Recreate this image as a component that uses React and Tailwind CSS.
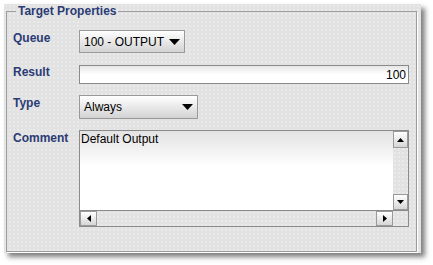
import React from "react";

const LABEL = "pt-[1px] text-[12px] font-bold leading-[14px] text-[#2b3b75]";
const TEX =
  "bg-[#e2e2e2] bg-[radial-gradient(circle,#eaeaea_0.7px,transparent_1px)] bg-[size:4px_4px]";

function Arrow({ dir, size = "sm" }) {
  const big = size === "lg";
  const w = big ? 11 : 7;
  const h = big ? 6 : 4;
  const pts = {
    down: `0,0 ${w},0 ${w / 2},${h}`,
    up: `0,${h} ${w},${h} ${w / 2},0`,
    left: `${h},0 ${h},${w} 0,${w / 2}`,
    right: `0,0 0,${w} ${h},${w / 2}`,
  }[dir];
  const vert = dir === "up" || dir === "down";
  return (
    <svg width={vert ? w : h} height={vert ? h : w} className="block">
      <polygon points={pts} fill="#000" />
    </svg>
  );
}

function Dropdown({ value, className }) {
  return (
    <div
      className={`flex ${className} items-center justify-between border border-[#999] bg-linear-to-b from-white to-[#d3d3d3] pl-[4px] pr-[4px] text-[12px] leading-[14px] text-black`}
    >
      <span>{value}</span>
      <Arrow dir="down" size="lg" />
    </div>
  );
}

function ScrollBtn({ dir, className }) {
  return (
    <div
      className={`flex items-center justify-center border border-[#9a9a9a] bg-linear-to-b from-white to-[#d6d6d6] ${className}`}
    >
      <Arrow dir={dir} />
    </div>
  );
}

export default function App() {
  return (
    <div className="h-[265px] w-[433px] bg-white p-[4px] font-['Liberation_Sans',Arial,sans-serif]">
      <div
        className={`h-[249px] w-[417px] pl-[2px] shadow-[4px_4px_5px_rgba(0,0,0,0.5)] ${TEX}`}
      >
        <fieldset className="h-[248px] w-[411px] border border-[#9c9c9c] pl-[6px] pt-[12px] shadow-[1px_1px_0_#fff]">
          <legend className="ml-[3px] px-[2px] text-[12px] font-bold leading-[14px] text-[#2b3b75]">
            Target Properties
          </legend>

          <div className="flex items-start">
            <div className={`w-[66px] ${LABEL}`}>Queue</div>
            <Dropdown value="100 - OUTPUT" className="h-[23px] w-[106px]" />
          </div>

          <div className="mt-[12px] flex items-start">
            <div className="w-[66px] text-[12px] font-bold leading-[14px] text-[#2b3b75]">
              Result
            </div>
            <div className="flex h-[19px] w-[330px] items-center justify-end border border-[#8a8a8a] bg-linear-to-b from-[#e6e6e6] via-white via-50% to-white pr-[2px] text-[12px] text-black">
              100
            </div>
          </div>

          <div className="mt-[11px] flex items-start">
            <div className={`w-[66px] ${LABEL}`}>Type</div>
            <Dropdown value="Always" className="h-[24px] w-[119px]" />
          </div>

          <div className="mt-[11px] flex items-start">
            <div className={`w-[66px] ${LABEL}`}>Comment</div>
            <div className="flex h-[97px] w-[330px] flex-col border border-[#8a8a8a]">
              <div className="flex min-h-0 flex-1">
                <div className="flex-1 bg-linear-to-b from-[#e3e3e3] via-white via-45% to-white pl-[1px] pt-[1px] text-[12px] leading-[14px] text-black">
                  Default Output
                </div>
                <div className={`flex w-[15px] flex-col ${TEX}`}>
                  <ScrollBtn dir="up" className="h-[17px]" />
                  <div className="flex-1" />
                  <ScrollBtn dir="down" className="h-[16px]" />
                </div>
              </div>
              <div className={`flex h-[16px] border-t border-[#8a8a8a] ${TEX}`}>
                <ScrollBtn dir="left" className="w-[17px]" />
                <div className="flex-1" />
                <ScrollBtn dir="right" className="w-[17px]" />
                <div className="w-[15px]" />
              </div>
            </div>
          </div>
        </fieldset>
      </div>
    </div>
  );
}
